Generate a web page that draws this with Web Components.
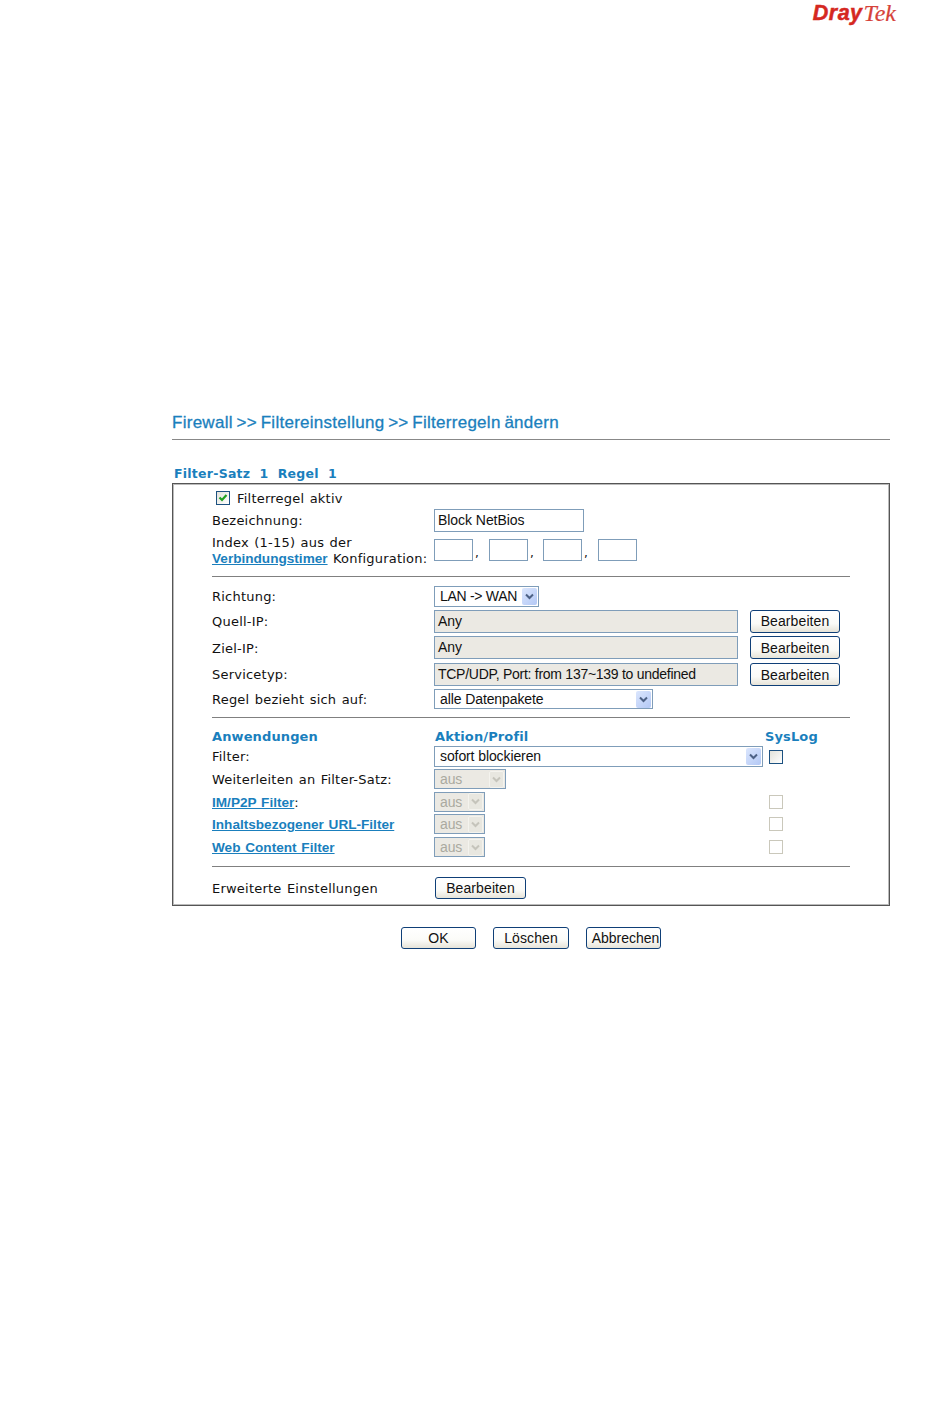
<!DOCTYPE html>
<html><head><meta charset="utf-8"><style>
html,body{margin:0;padding:0;background:#fff}
body{font:13px "DejaVu Sans",sans-serif;color:#111}
.l{color:#1a7fbd;font-weight:bold;text-decoration:underline;font-family:"Liberation Sans",sans-serif;font-size:13.6px;letter-spacing:0;word-spacing:1px}
</style></head><body>
<dr-page>
<dr-title slot="title">Firewall &gt;&gt; Filtereinstellung &gt;&gt; Filterregeln ändern</dr-title>
<dr-caption slot="caption">Filter-Satz&nbsp; 1&nbsp; Regel&nbsp; 1</dr-caption>
<dr-panel slot="panel">
  <dr-row h="19" top="4"><span slot="a" style="display:flex;align-items:center;gap:7px;padding-left:4px;margin-top:0"><dr-check state="on"></dr-check><span style="margin-top:3px">Filterregel aktiv</span></span></dr-row>
  <dr-row h="23" top="2"><span slot="a" style="margin-top:0">Bezeichnung:</span><dr-field slot="b" w="150" h="23">Block NetBios</dr-field></dr-row>
  <dr-row h="37"><span slot="a" style="line-height:16px;margin-top:0">Index (1-15) aus der<br><a class="l">Verbindungstimer</a> Konfiguration:</span>
    <span slot="b" style="display:flex;align-items:flex-end;height:22px;font-size:12px;margin-bottom:1px">
      <dr-field w="39" h="22"></dr-field><span style="width:16px;padding-left:2px;box-sizing:border-box">,</span><dr-field w="39" h="22"></dr-field><span style="width:15px;padding-left:2px;box-sizing:border-box">,</span><dr-field w="39" h="22"></dr-field><span style="width:16px;padding-left:2px;box-sizing:border-box">,</span><dr-field w="39" h="22"></dr-field>
    </span></dr-row>
  <dr-rule></dr-rule>
  <dr-row h="24" top="7"><span slot="a">Richtung:</span><dr-select slot="b" w="105" h="21" style="letter-spacing:-.3px">LAN -&gt; WAN</dr-select></dr-row>
  <dr-row h="26"><span slot="a">Quell-IP:</span><dr-field slot="b" w="304" h="23" ro>Any</dr-field><dr-button slot="c" w="90" h="23">Bearbeiten</dr-button></dr-row>
  <dr-row h="27"><span slot="a">Ziel-IP:</span><dr-field slot="b" w="304" h="23" ro>Any</dr-field><dr-button slot="c" w="90" h="23">Bearbeiten</dr-button></dr-row>
  <dr-row h="25" top="1"><span slot="a" style="margin-top:0">Servicetyp:</span><dr-field slot="b" w="304" h="23" ro style="letter-spacing:-.27px">TCP/UDP, Port: from 137~139 to undefined</dr-field><dr-button slot="c" w="90" h="23">Bearbeiten</dr-button></dr-row>
  <dr-row h="24"><span slot="a">Regel bezieht sich auf:</span><dr-select slot="b" w="219" h="20">alle Datenpakete</dr-select></dr-row>
  <dr-rule style="margin-top:6px"></dr-rule>
  <dr-row h="14" top="11"><dr-head slot="a">Anwendungen</dr-head><dr-head slot="b" style="margin-left:1px">Aktion/Profil</dr-head><dr-head slot="c" style="margin-left:15px">SysLog</dr-head></dr-row>
  <dr-row h="22" top="2"><span slot="a">Filter:</span><dr-select slot="b" w="329" h="21">sofort blockieren</dr-select><dr-check slot="c" state="off" style="margin-left:19px;margin-top:2px"></dr-check></dr-row>
  <dr-row h="24"><span slot="a">Weiterleiten an Filter-Satz:</span><dr-select slot="b" w="72" h="20" off>aus</dr-select></dr-row>
  <dr-row h="21"><span slot="a"><a class="l">IM/P2P Filter</a>:</span><dr-select slot="b" w="51" h="20" off>aus</dr-select><dr-check slot="c" state="dis" style="margin-left:19px"></dr-check></dr-row>
  <dr-row h="24"><span slot="a"><a class="l">Inhaltsbezogener URL-Filter</a></span><dr-select slot="b" w="51" h="20" off>aus</dr-select><dr-check slot="c" state="dis" style="margin-left:19px"></dr-check></dr-row>
  <dr-row h="22"><span slot="a"><a class="l">Web Content Filter</a></span><dr-select slot="b" w="51" h="20" off>aus</dr-select><dr-check slot="c" state="dis" style="margin-left:19px"></dr-check></dr-row>
  <dr-rule style="margin-top:8px"></dr-rule>
  <dr-row h="24" top="9"><span slot="a">Erweiterte Einstellungen</span><dr-button slot="b" w="91" h="22" style="margin-left:1px">Bearbeiten</dr-button></dr-row>
</dr-panel>
<dr-actions slot="actions">
  <dr-button w="75" h="22">OK</dr-button>
  <dr-button w="76" h="22">Löschen</dr-button>
  <dr-button w="75" h="22" style="padding-left:4px;letter-spacing:0">Abbrechen</dr-button>
</dr-actions>
</dr-page>
<script>
const el=(name,css,html,init)=>customElements.define(name,class extends HTMLElement{
  connectedCallback(){
    if(this.shadowRoot)return;
    const r=this.attachShadow({mode:'open'});
    r.innerHTML='<style>'+css+'</style>'+html;
    if(init)init(this,r);
  }
});
const size=(h)=>{if(h.hasAttribute('w'))h.style.width=h.getAttribute('w')+'px';if(h.hasAttribute('h'))h.style.height=h.getAttribute('h')+'px';};
el('dr-page',`:host{display:block;width:950px;height:1409px;box-sizing:border-box;padding:0 60px 0 172px}
.logo{height:26px;display:flex;justify-content:flex-end;align-items:flex-start;margin-right:-6px;white-space:nowrap;line-height:26px}
.d{font:italic bold 21.5px/26px "Liberation Sans",sans-serif;letter-spacing:.5px;color:#d5281f;-webkit-text-stroke:.5px #d5281f}
.t{font:italic 24px/26px "Liberation Serif",serif;color:#d6423a;margin-left:1px;-webkit-text-stroke:.2px #d6423a}
.head{margin-top:387px}
.cap{margin-top:24px}
.act{margin-top:21px}`,
`<div class="logo"><span class="d">Dray</span><span class="t">Tek</span></div>
<div class="head"><slot name="title"></slot></div>
<div class="cap"><slot name="caption"></slot></div>
<slot name="panel"></slot>
<div class="act"><slot name="actions"></slot></div>`);
el('dr-title',`:host{display:block;color:#1a7fbd;font:17px/20px "Liberation Sans",sans-serif;letter-spacing:.27px;word-spacing:-1.2px;-webkit-text-stroke:.3px #1a7fbd;height:26px;border-bottom:1px solid #888;white-space:nowrap}`,`<slot></slot>`);
el('dr-caption',`:host{display:block;color:#1a7fbd;font:bold 12.5px/19px "DejaVu Sans",sans-serif;padding-left:2px;height:19px;letter-spacing:.25px}`,`<slot></slot>`);
el('dr-panel',`:host{display:block;width:718px;height:423px;box-sizing:border-box;border:1px solid #555;outline:1px solid #bbb;outline-offset:-2px;padding:0 39px}`,`<slot></slot>`);
el('dr-row',`:host{display:grid;grid-template-columns:222px 316px 1fr;align-items:center;font:13px/16px "DejaVu Sans",sans-serif;color:#111;letter-spacing:.22px;word-spacing:1px;white-space:nowrap}
::slotted(*){align-self:center}
::slotted(span[slot=a]){margin-top:2px}`,`<slot name="a"></slot><slot name="b"><span></span></slot><slot name="c"><span></span></slot>`,
(h)=>{h.style.height=h.getAttribute('h')+'px';if(h.hasAttribute('top'))h.style.marginTop=h.getAttribute('top')+'px';});
el('dr-rule',`:host{display:block;height:1px;background:#808080;margin-top:7px;width:638px}`,``);
el('dr-head',`:host{display:block;color:#1a7fbd;font:bold 13px/16px "DejaVu Sans",sans-serif;letter-spacing:.12px;word-spacing:0}`,`<slot></slot>`);
el('dr-field',`:host{display:block;box-sizing:border-box;border:1px solid #7f9db9;background:#fff;font:14px/20px "Liberation Sans",sans-serif;color:#111;padding-left:3px;letter-spacing:-.05px;word-spacing:0;overflow:hidden;white-space:nowrap;flex:none}
:host([ro]){background:#ebe9e3}`,`<slot></slot>`,size);
el('dr-select',`:host{display:flex;align-items:center;box-sizing:border-box;border:1px solid #7f9db9;background:#fff;font:14px/18px "Liberation Sans",sans-serif;color:#111;padding:0 1px 0 5px;white-space:nowrap;flex:none;letter-spacing:-.1px;word-spacing:0}
:host([off]){background:#ebe9e3;color:#aaa9a0}
.txt{flex:1;overflow:hidden}
.b{width:15px;height:17px;border-radius:2px;background:linear-gradient(135deg,#dbe6fd,#b3c8f5);display:flex;align-items:center;justify-content:center;flex:none}
:host([off]) .b{background:#e8e7e0;border:1px solid #f4f3ee;box-sizing:border-box}
svg{display:block}`,
`<span class="txt"><slot></slot></span><span class="b"><svg width="9" height="7" viewBox="0 0 9 7"><path d="M1 1.5 L4.5 5 L8 1.5" fill="none" stroke="#4d6185" stroke-width="2"/></svg></span>`,
(h,r)=>{size(h);if(h.hasAttribute('off'))r.querySelector('path').setAttribute('stroke','#c5c4bb');});
el('dr-button',`:host{display:flex;align-items:center;justify-content:center;box-sizing:border-box;border:1px solid #0f3f77;border-radius:3px;background:linear-gradient(#fff 0%,#fbfbf8 60%,#e6e3d8 100%);font:14px/18px "Liberation Sans",sans-serif;color:#111;letter-spacing:.1px;word-spacing:0;white-space:nowrap;flex:none}`,`<slot></slot>`,size);
el('dr-check',`:host{display:inline-flex;width:14px;height:14px;box-sizing:border-box;border:1px solid #1c5180;background:linear-gradient(135deg,#e2e2da,#fff);align-items:center;justify-content:center;flex:none}
:host([state=dis]){border-color:#cac8bb;background:#fff}
svg{display:block}`,`<svg width="10" height="10" viewBox="0 0 10 10"></svg>`,
(h,r)=>{if(h.getAttribute('state')=='on')r.querySelector('svg').innerHTML='<path d="M1.5 4.5 L4 7 L8.5 2" fill="none" stroke="#21a121" stroke-width="2.2"/>';});
el('dr-actions',`:host{display:flex;gap:17px;padding-left:229px}`,`<slot></slot>`);
</script>
</body></html>
